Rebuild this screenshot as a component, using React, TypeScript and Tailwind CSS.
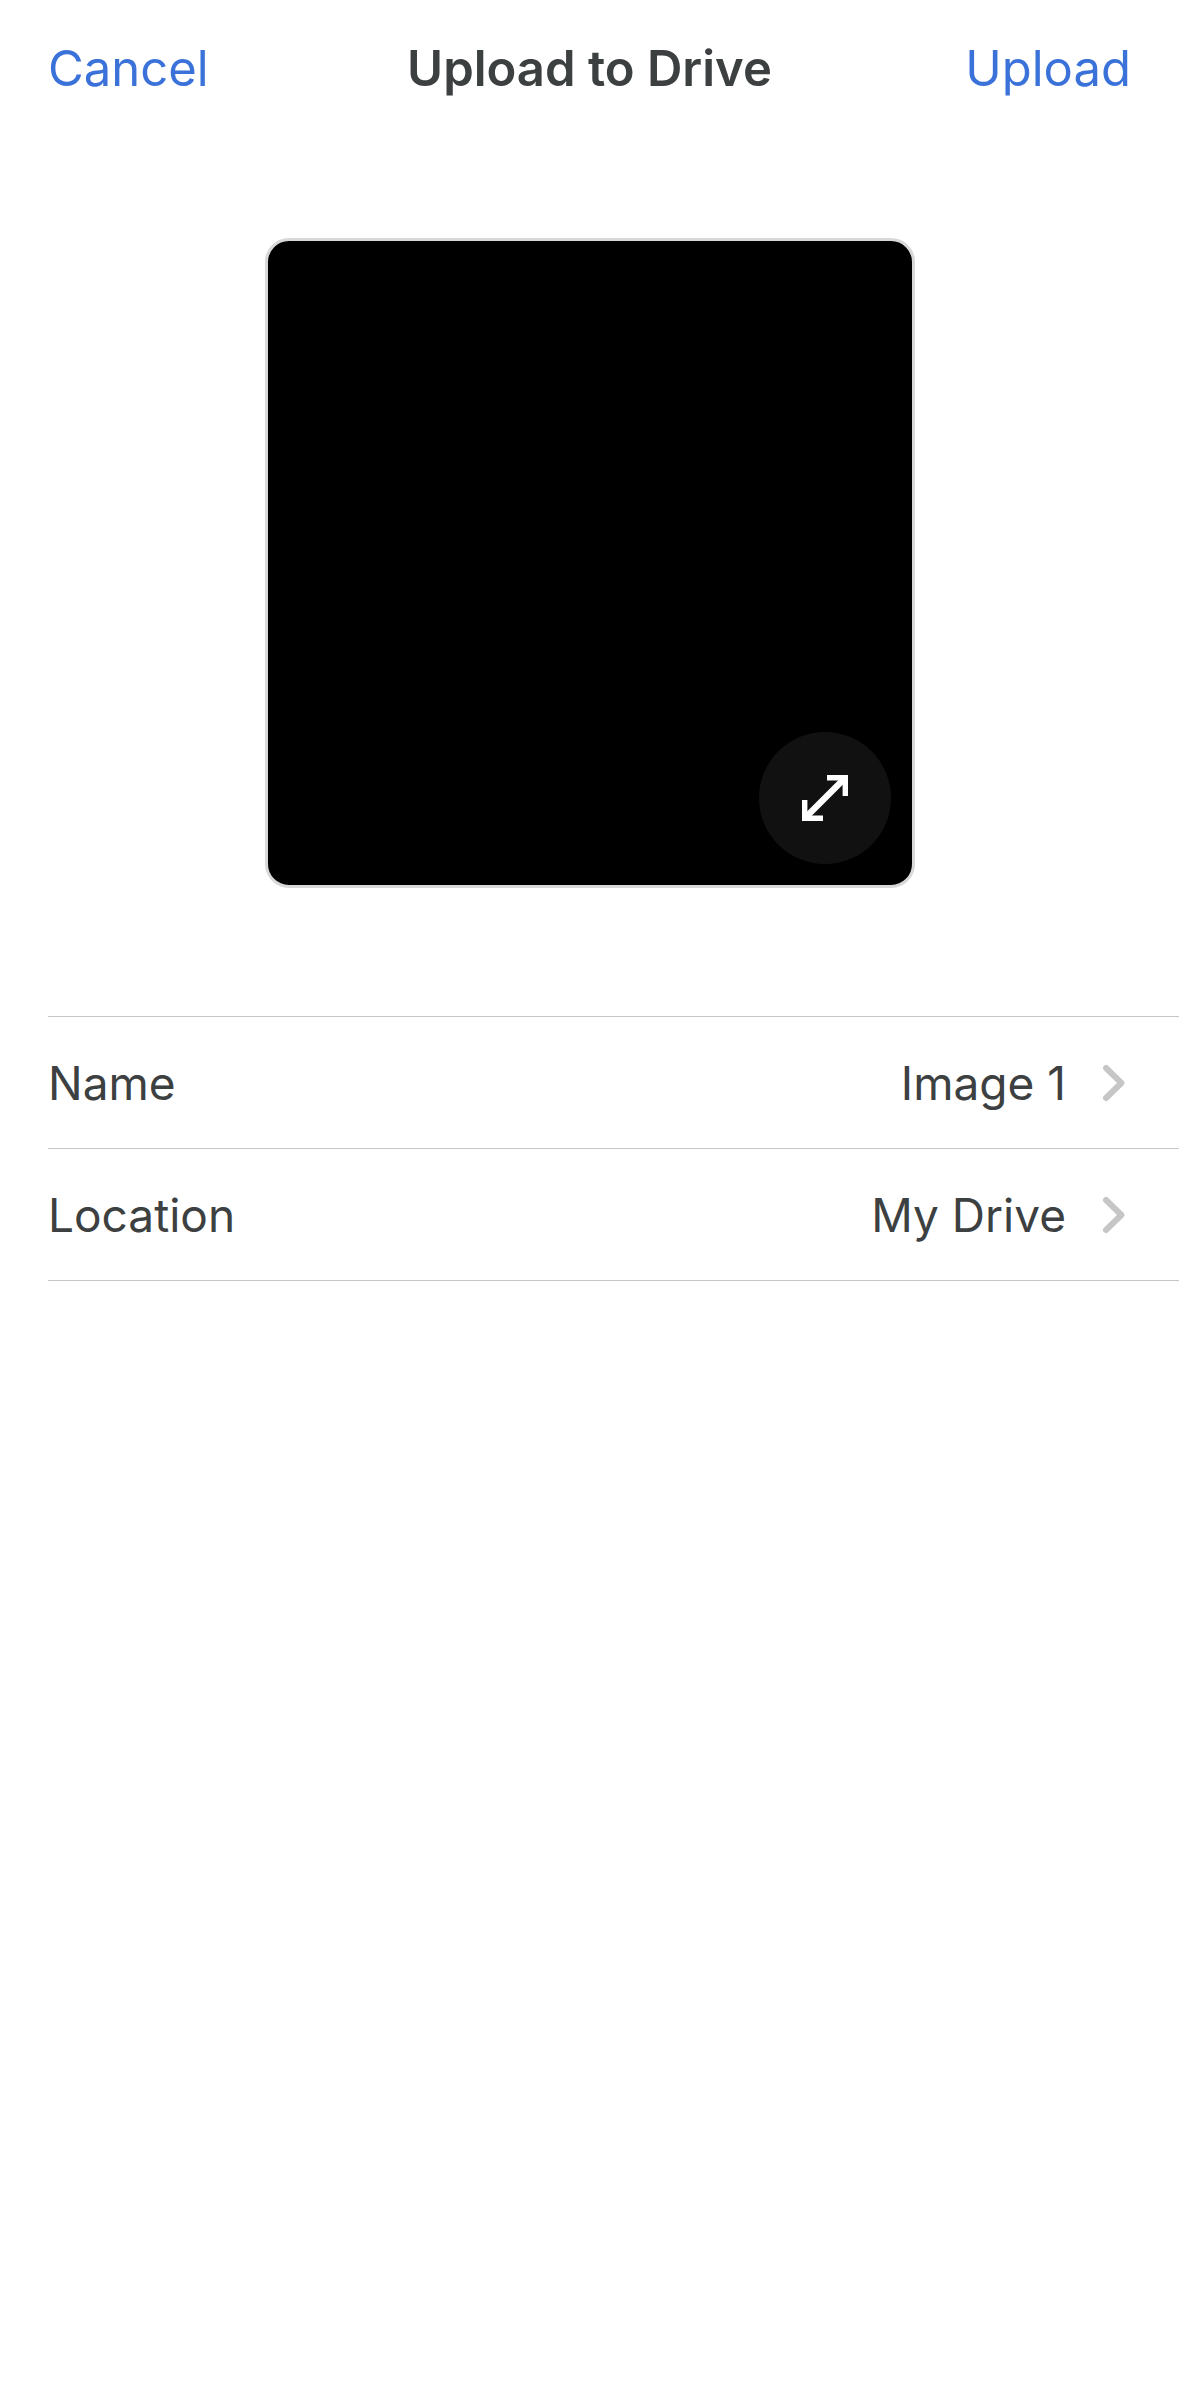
import { useState } from 'react';

const rows = [
  { label: 'Name', value: 'Image 1' },
  { label: 'Location', value: 'My Drive' },
];

export default function UploadToDrive() {
  const [expanded, setExpanded] = useState(false);

  return (
    <div className="min-h-screen bg-white text-[#3d4041] font-['Inter','Liberation_Sans',sans-serif]">
      {/* Top bar */}
      <header className="grid grid-cols-[1fr_auto_1fr] items-center h-[138px] px-12 text-[49px] leading-[60px]">
        <button type="button" className="justify-self-start text-[#3b72d9]">
          Cancel
        </button>
        <h1 className="font-semibold">Upload to Drive</h1>
        <button type="button" className="justify-self-end text-[#3b72d9]">
          Upload
        </button>
      </header>

      <main>
        {/* Preview */}
        <div
          className={`relative mx-auto mt-[100px] aspect-square bg-black border-3 border-[#d8d8d8] rounded-3xl ${
            expanded ? 'w-11/12' : 'w-full max-w-[650px]'
          }`}
        >
          <button
            type="button"
            aria-label="Expand preview"
            onClick={() => setExpanded(!expanded)}
            className="absolute right-[21px] bottom-[21px] size-[132px] rounded-full bg-[#111111] text-white flex items-center justify-center"
          >
            <ExpandIcon />
          </button>
        </div>

        {/* File details */}
        <ul className="mt-32 ml-12 border-t border-[#c6c6c6]">
          {rows.map((row) => (
            <li key={row.label} className="border-b border-[#c6c6c6]">
              <button
                type="button"
                className="flex items-center w-full h-[131px] pr-[53px] text-[46px] leading-[56px]"
              >
                <span>{row.label}</span>
                <span className="ml-auto mr-9">{row.value}</span>
                <ChevronIcon />
              </button>
            </li>
          ))}
        </ul>
      </main>
    </div>
  );
}

function ExpandIcon() {
  return (
    <svg width="46" height="46" viewBox="0 0 46 46" fill="none" stroke="currentColor" strokeWidth="5.4" aria-hidden="true">
      <path d="M25 2.7h18.3V21" />
      <path d="M2.7 25v18.3H21" />
      <path d="M4 42l38-38" strokeWidth="6.4" />
    </svg>
  );
}

function ChevronIcon() {
  return (
    <svg
      width="24"
      height="38"
      viewBox="0 0 24 38"
      fill="none"
      stroke="#c6c6c6"
      strokeWidth="6"
      strokeLinecap="round"
      strokeLinejoin="round"
      aria-hidden="true"
    >
      <path d="M4 4l15.4 15-15.4 15" />
    </svg>
  );
}
